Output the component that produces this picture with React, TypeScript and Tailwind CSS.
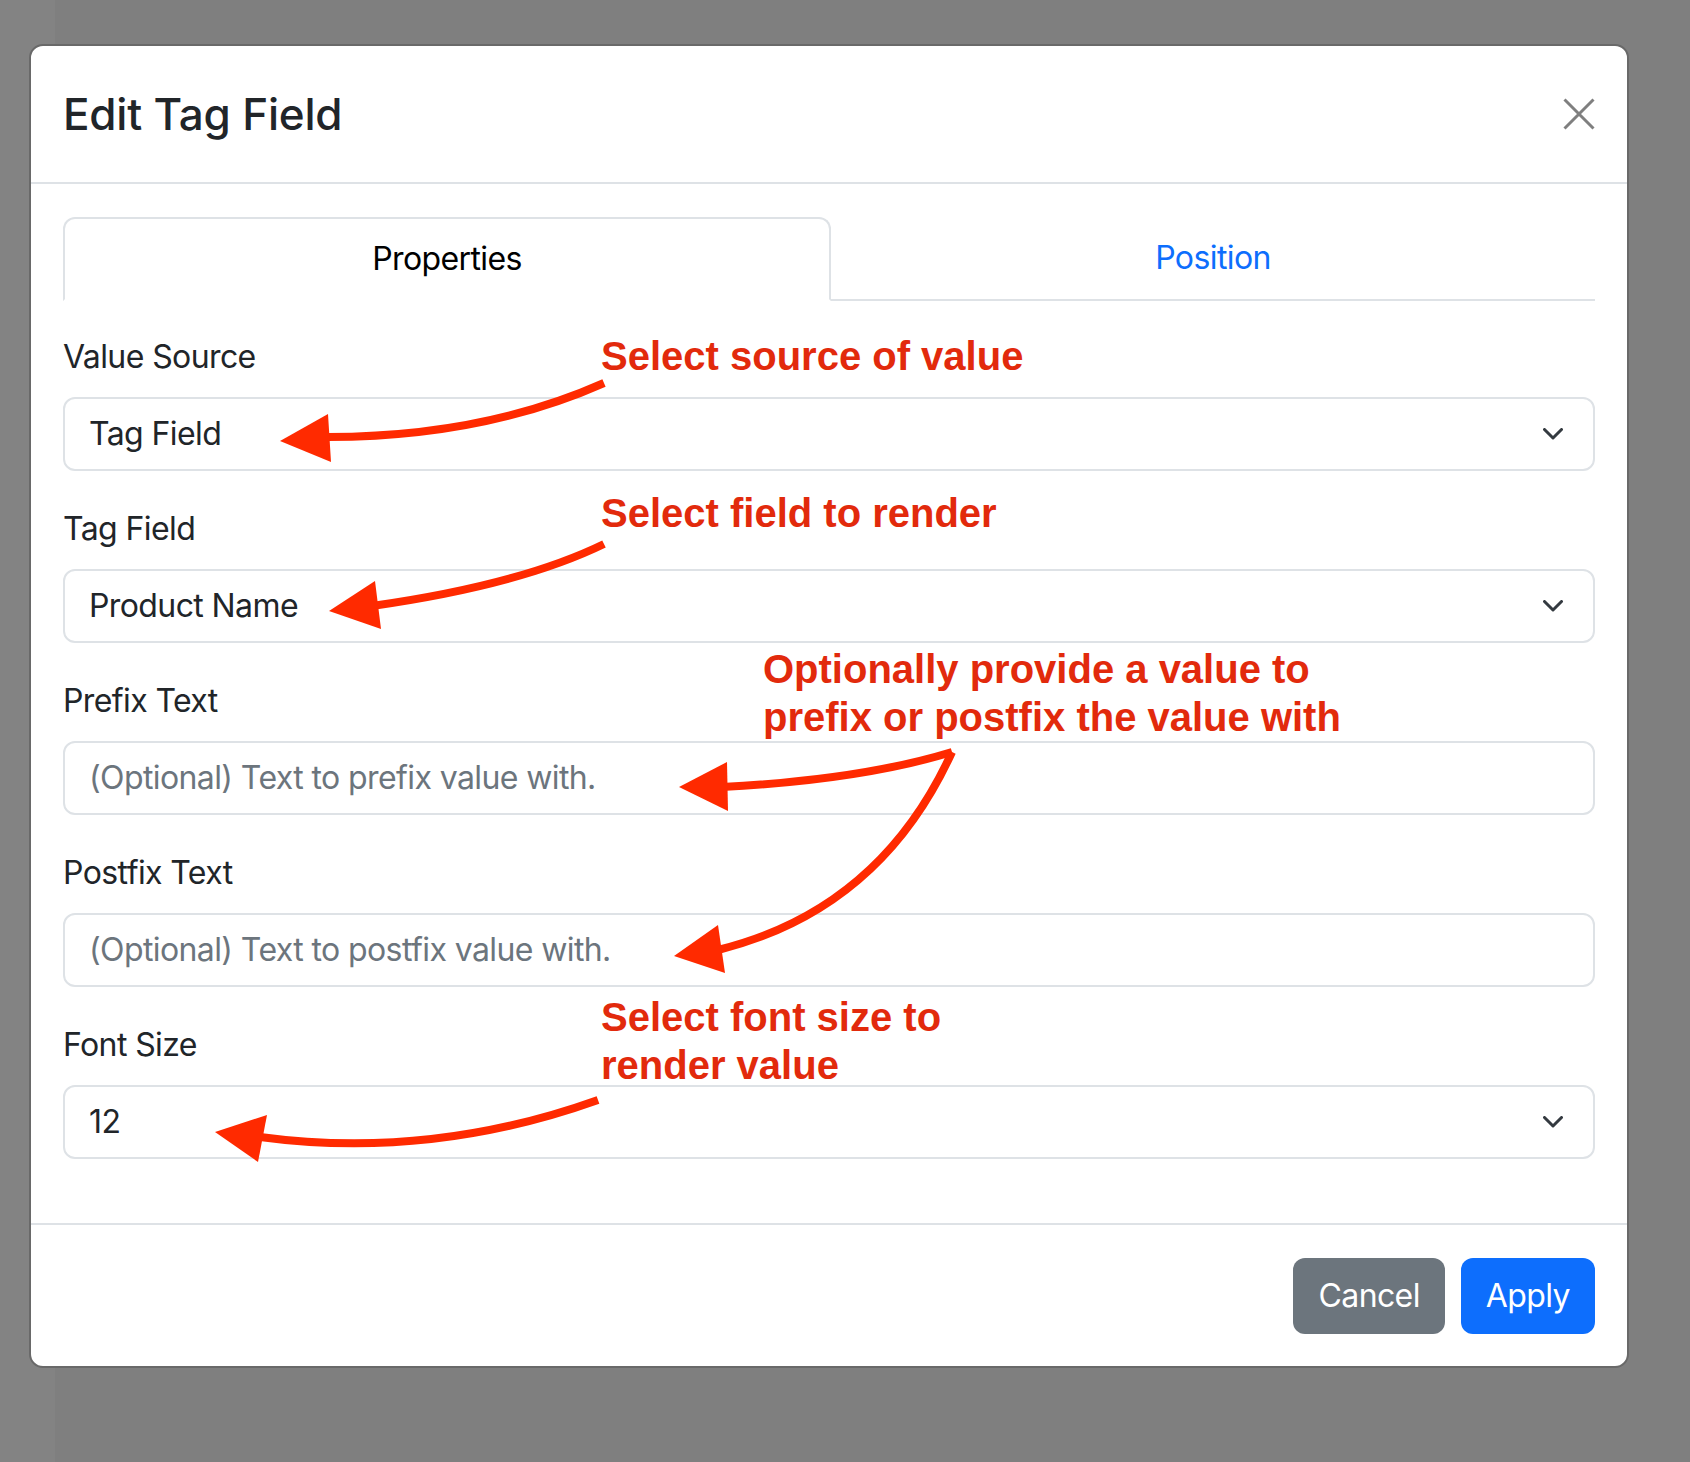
import React from "react";

const RED_TEXT = "absolute font-['Liberation_Sans',Arial,sans-serif] font-bold text-[40px] leading-[48px] tracking-normal text-[#e22a0c] whitespace-nowrap";

function Chevron() {
    return (
        <svg width="20" height="12" viewBox="0 0 20 12" fill="none">
            <path d="M1.5 1.5 L10 10 L18.5 1.5" stroke="#343a40" strokeWidth="3" strokeLinecap="round" strokeLinejoin="round" />
        </svg>
    );
}

const Field = ({ label, value, placeholder, select = false }: { label: string; value?: string; placeholder?: string; select?: boolean }) => (
    <div className="flex flex-col">
        <label className="h-[48px] leading-[48px] mb-[16px] text-[#212529]">{label}</label>
        <div className="h-[74px] rounded-[12px] border-2 border-[#dee2e6] flex items-center justify-between pl-[24px] pr-[30px]">
            <span className={value ? "text-[#212529]" : "text-[#6c757d]"}>{value ?? placeholder}</span>
            {select && <Chevron />}
        </div>
    </div>
);

export default function App() {
    return (
        <div className="relative w-[1690px] h-[1462px] overflow-hidden pt-[44px] pl-[29px] bg-[linear-gradient(to_right,#838383_0px,#838383_55px,#7f7f7f_55px)] font-['Inter','Noto_Sans',sans-serif] text-[32px] tracking-[-0.6px]">
            {/* Modal */}
            <div className="w-[1600px] bg-white rounded-[14px] border-2 border-[#696969]">
                {/* Header */}
                <div className="h-[138px] flex items-center justify-between px-[32px] border-b-2 border-[#dee2e6]">
                    <h4 className="text-[44px] font-medium text-[#212529] tracking-[-0.2px]">Edit Tag Field</h4>
                    <svg width="32" height="32" viewBox="0 0 32 32" fill="none">
                        <path d="M1.5 1.5 L30.5 30.5 M30.5 1.5 L1.5 30.5" stroke="#7f7f7f" strokeWidth="3" />
                    </svg>
                </div>

                {/* Body */}
                <div className="px-[32px] pt-[33px] pb-[64px]">
                    <div className="flex border-b-2 border-[#dee2e6]">
                        <div className="flex-1 h-[84px] -mb-[2px] flex items-center justify-center border-2 border-[#dee2e6] border-b-white rounded-t-[12px] bg-white text-black">
                            Properties
                        </div>
                        <div className="flex-1 h-[82px] flex items-center justify-center text-[#0d6efd]">Position</div>
                    </div>

                    <div className="mt-[32px] flex flex-col gap-[34px]">
                        <Field label="Value Source" value="Tag Field" select />
                        <Field label="Tag Field" value="Product Name" select />
                        <Field label="Prefix Text" placeholder="(Optional) Text to prefix value with." />
                        <Field label="Postfix Text" placeholder="(Optional) Text to postfix value with." />
                        <Field label="Font Size" value="12" select />
                    </div>
                </div>

                {/* Footer */}
                <div className="flex justify-end gap-[16px] border-t-2 border-[#dee2e6] pt-[33px] pb-[32px] px-[32px]">
                    <button className="h-[76px] px-[25px] rounded-[12px] bg-[#6c757d] text-white">Cancel</button>
                    <button className="h-[76px] px-[25px] rounded-[12px] bg-[#0d6efd] text-white">Apply</button>
                </div>
            </div>

            {/* Annotations */}
            <div className={`${RED_TEXT} left-[601px] top-[332px]`}>Select source of value</div>
            <div className={`${RED_TEXT} left-[601px] top-[489px]`}>Select field to render</div>
            <div className={`${RED_TEXT} left-[763px] top-[645px]`}>
                Optionally provide a value to
                <br />
                prefix or postfix the value with
            </div>
            <div className={`${RED_TEXT} left-[601px] top-[993px]`}>
                Select font size to
                <br />
                render value
            </div>

            <svg className="absolute left-0 top-0 pointer-events-none" width="1690" height="1462" viewBox="0 0 1690 1462" fill="none">
                <g stroke="#ff2a00" strokeWidth="8" strokeLinecap="butt" fill="none">
                    <path d="M604 383 Q480 438 322 437" />
                    <path d="M604 544 Q520 585 372 606" />
                    <path d="M952 752 Q860 780 722 787" />
                    <path d="M952 752 Q880 910 718 950" />
                    <path d="M598 1100 Q430 1160 260 1137" />
                </g>
                <g fill="#ff2a00">
                    <polygon points="280,441 328,414 331,462" />
                    <polygon points="329,611 375,581 381,629" />
                    <polygon points="679,787 727,762 728,811" />
                    <polygon points="674,956 718,925 725,973" />
                    <polygon points="215,1132 267,1115 258,1162" />
                </g>
            </svg>
        </div>
    );
}
